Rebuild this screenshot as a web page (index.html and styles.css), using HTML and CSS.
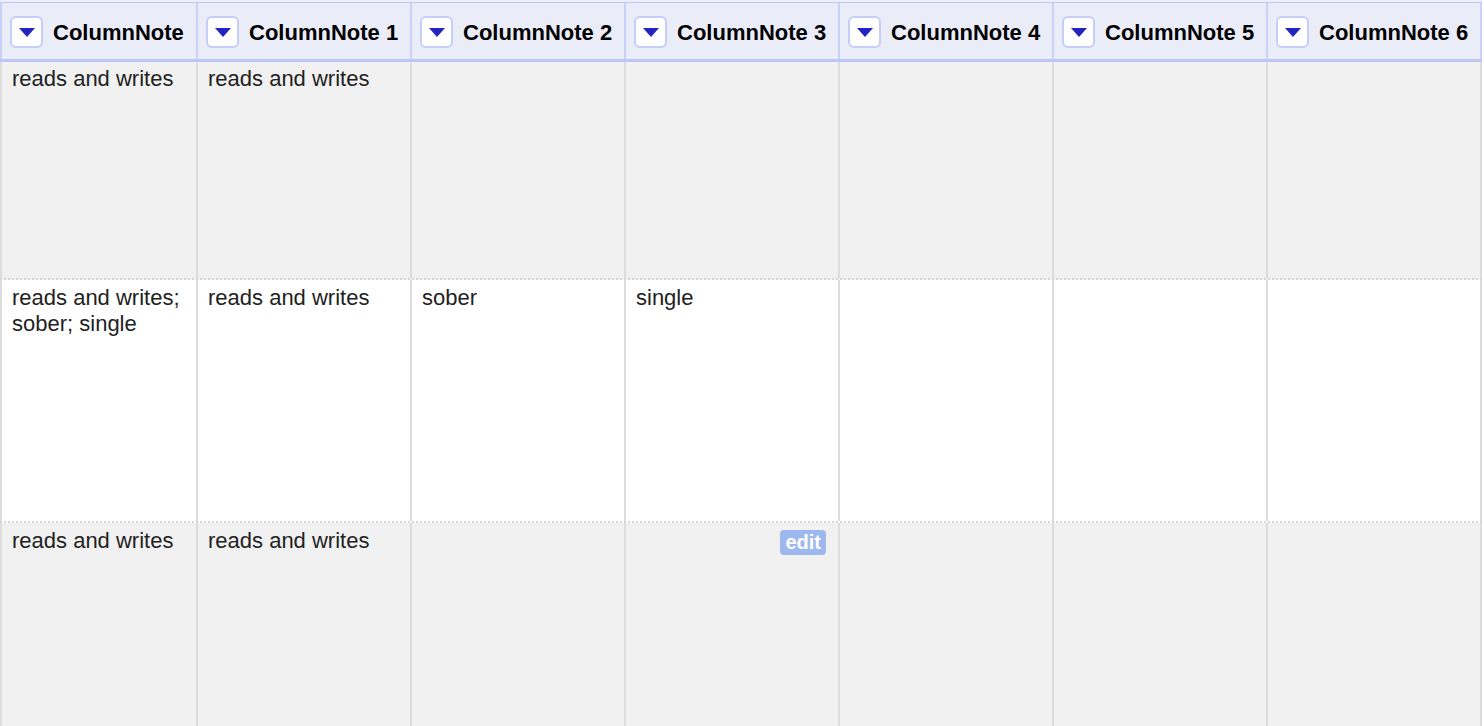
FILE: index.html
```html
<!DOCTYPE html>
<html>
<head>
<meta charset="utf-8">
<link rel="stylesheet" href="styles.css">
</head>
<body>
<div class="sheet">
  <div class="hrow">
    <div class="hcell first"><span class="drop"><svg viewBox="0 0 16 10" width="16" height="10"><path d="M0 0H16L8 9Z" fill="#2323c2"/></svg></span><span class="htext">ColumnNote</span></div>
    <div class="hcell"><span class="drop"><svg viewBox="0 0 16 10" width="16" height="10"><path d="M0 0H16L8 9Z" fill="#2323c2"/></svg></span><span class="htext">ColumnNote 1</span></div>
    <div class="hcell"><span class="drop"><svg viewBox="0 0 16 10" width="16" height="10"><path d="M0 0H16L8 9Z" fill="#2323c2"/></svg></span><span class="htext">ColumnNote 2</span></div>
    <div class="hcell"><span class="drop"><svg viewBox="0 0 16 10" width="16" height="10"><path d="M0 0H16L8 9Z" fill="#2323c2"/></svg></span><span class="htext">ColumnNote 3</span></div>
    <div class="hcell"><span class="drop"><svg viewBox="0 0 16 10" width="16" height="10"><path d="M0 0H16L8 9Z" fill="#2323c2"/></svg></span><span class="htext">ColumnNote 4</span></div>
    <div class="hcell"><span class="drop"><svg viewBox="0 0 16 10" width="16" height="10"><path d="M0 0H16L8 9Z" fill="#2323c2"/></svg></span><span class="htext">ColumnNote 5</span></div>
    <div class="hcell last"><span class="drop"><svg viewBox="0 0 16 10" width="16" height="10"><path d="M0 0H16L8 9Z" fill="#2323c2"/></svg></span><span class="htext">ColumnNote 6</span></div>
  </div>
  <div class="row shade r1">
    <div class="cell first">reads and writes</div>
    <div class="cell">reads and writes</div>
    <div class="cell"></div>
    <div class="cell"></div>
    <div class="cell"></div>
    <div class="cell"></div>
    <div class="cell last"></div>
  </div>
  <div class="row r2">
    <div class="cell first">reads and writes; sober; single</div>
    <div class="cell">reads and writes</div>
    <div class="cell">sober</div>
    <div class="cell">single</div>
    <div class="cell"></div>
    <div class="cell"></div>
    <div class="cell last"></div>
  </div>
  <div class="row shade r3">
    <div class="cell first">reads and writes</div>
    <div class="cell">reads and writes</div>
    <div class="cell"></div>
    <div class="cell edit-cell"><span class="edit">edit</span></div>
    <div class="cell"></div>
    <div class="cell"></div>
    <div class="cell last"></div>
  </div>
</div>
</body>
</html>
```

FILE: styles.css
```css
html, body {
  margin: 0;
  padding: 0;
  background: #ffffff;
  overflow: hidden;
}
body {
  font-family: "Liberation Sans", Arial, sans-serif;
  color: #222222;
}
.sheet {
  width: 1482px;
  padding-top: 2px;
  background: #eef0fa;
}
.hrow {
  display: flex;
  height: 56px;
  background: #eaecf8;
  border-top: 1px solid #bcc7f7;
  border-bottom: 3px solid #bcc7f7;
}
.hcell {
  box-sizing: border-box;
  width: 214px;
  flex: none;
  display: flex;
  align-items: center;
  padding-left: 8px;
  border-left: 2px solid #c9d1f8;
  font-weight: bold;
  font-size: 22px;
  color: #000;
}
.hcell.first {
  width: 196px;
}
.hcell.last {
  border-right: 2px solid #c9d1f8;
  width: 216px;
}
.drop {
  box-sizing: border-box;
  width: 33px;
  height: 32px;
  margin-right: 10px;
  margin-top: 2px;
  background: #ffffff;
  border: 2px solid #c6cef8;
  border-radius: 6px;
  display: flex;
  align-items: center;
  justify-content: center;
  flex: none;
}
.drop svg {
  display: block;
  margin-top: 1px;
}
.htext {
  white-space: nowrap;
  line-height: 26px;
  padding-top: 4px;
}
.row {
  display: flex;
  background: #ffffff;
}
.row.shade {
  background: #f1f1f1;
}
.r1 {
  height: 216px;
  border-bottom: 2px dotted #d6d6d6;
}
.r2 {
  height: 241px;
  border-bottom: 2px dotted #d6d6d6;
}
.r3 {
  height: 220px;
}
.cell {
  box-sizing: border-box;
  width: 214px;
  flex: none;
  padding: 4px 10px 0 10px;
  border-left: 2px solid #dcdcdc;
  font-size: 22px;
  line-height: 26px;
}
.r2 .cell,
.r3 .cell {
  padding-top: 5px;
}
.cell.first {
  width: 196px;
}
.cell.last {
  width: 216px;
  border-right: 2px solid #dcdcdc;
}
.row .edit-cell {
  display: flex;
  justify-content: flex-end;
  align-items: flex-start;
  padding-top: 7px;
  padding-right: 12px;
}
.edit {
  background: #9db7ef;
  color: #ffffff;
  font-weight: bold;
  font-size: 20px;
  line-height: 25px;
  padding: 0 5px;
  border-radius: 4px;
}
```
